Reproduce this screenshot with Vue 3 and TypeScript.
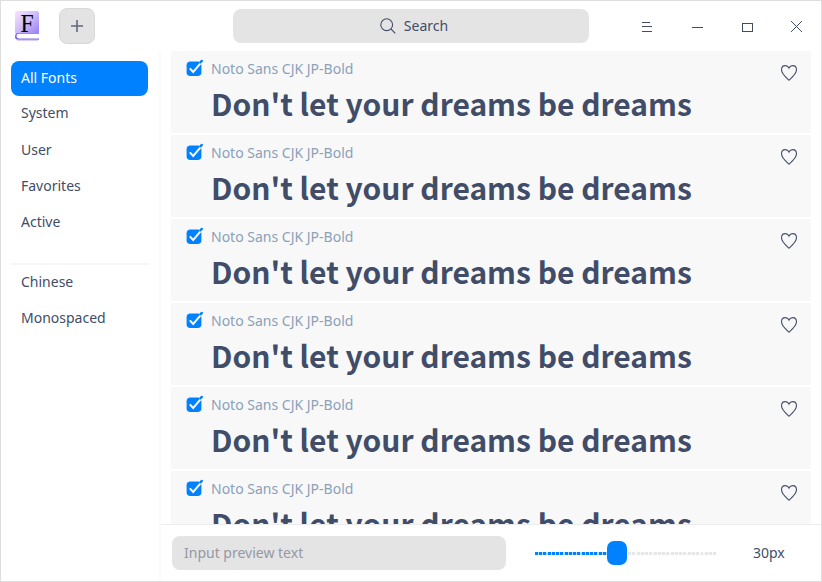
<script setup lang="ts">
import { ref } from 'vue'

interface FontItem {
  id: number
  name: string
  enabled: boolean
}

const groups = ['All Fonts', 'System', 'User', 'Favorites', 'Active']
const categories = ['Chinese', 'Monospaced']
const selected = ref('All Fonts')
const preview = "Don't let your dreams be dreams"
const fonts = ref<FontItem[]>(
  Array.from({ length: 6 }, (_, id) => ({ id, name: 'Noto Sans CJK JP-Bold', enabled: true })),
)
</script>

<template>
  <div class="window">
    <header class="titlebar">
      <svg class="logo" width="26" height="32" viewBox="0 0 26 32">
        <defs>
          <linearGradient id="cover" x1="0" y1="0" x2="1" y2="1">
            <stop offset="0" stop-color="#fbe3fc" />
            <stop offset="0.5" stop-color="#cdbcfb" />
            <stop offset="1" stop-color="#967ff5" />
          </linearGradient>
        </defs>
        <path d="M3 1H23a2 2 0 0 1 2 2V23.5H1V3a2 2 0 0 1 2-2z" fill="url(#cover)" />
        <path d="M4 23H25V29.8H4Q1 29.5 1 26.4Q1.3 23 4 23z" fill="#8065da" />
        <path d="M25 23.8H4.8a2.3 2.3 0 0 0 0 4.6H25z" fill="#fff" />
        <path d="M3 30.3H24" stroke="#cfc5f3" stroke-width="1" />
        <text class="letter" x="6.6" y="22" textLength="13.2" lengthAdjust="spacingAndGlyphs">F</text>
      </svg>
      <button class="add" aria-label="Add font">
        <svg width="12" height="12"><path d="M6 0V12M0 6H12" stroke="#5f697f" stroke-width="1.6" /></svg>
      </button>
      <div class="search">
        <svg width="16" height="16" fill="none" stroke="#414d68" stroke-width="1.1">
          <circle cx="6.7" cy="6.7" r="5.9" /><path d="M11 11L15.3 15.3" />
        </svg>
        <span>Search</span>
      </div>
      <nav class="controls">
        <svg width="50" height="50" class="crisp"><path d="M21 22.5H29M21 26.5H31M21 31.5H31" /></svg>
        <svg width="50" height="50" class="crisp"><path d="M21 27.5H32" /></svg>
        <svg width="50" height="50" class="crisp"><path d="M21.5 23.5H31.5V31.5H21.5z" /></svg>
        <svg width="50" height="50"><path d="M20 21L31 32M31 21L20 32" /></svg>
      </nav>
    </header>
    <div class="body">
      <aside class="sidebar">
        <div
          v-for="group in groups" :key="group" class="entry"
          :class="{ active: selected === group, raised: group === 'System' }" @click="selected = group"
        >{{ group }}</div>
        <div class="divider"></div>
        <div
          v-for="category in categories" :key="category" class="entry"
          :class="{ active: selected === category }" @click="selected = category"
        >{{ category }}</div>
      </aside>
      <main class="content">
        <section class="list">
          <article v-for="font in fonts" :key="font.id" class="row">
            <svg class="check" width="18" height="18" viewBox="0 0 18 18" @click="font.enabled = !font.enabled">
              <rect x="0.6" y="2.4" width="14.8" height="14.6" rx="3.8" fill="#0081ff" />
              <template v-if="font.enabled">
                <path d="M3.8 9.4L7.2 13L15.4 3.4" fill="none" stroke="#f8f8f8" stroke-width="2" />
                <path d="M14.6 3.3L15.8 1.9" stroke="#0081ff" stroke-width="2.4" stroke-linecap="round" />
              </template>
            </svg>
            <div class="info">
              <div class="name">{{ font.name }}</div>
              <div class="sample">{{ preview }}</div>
            </div>
            <svg class="heart" width="18" height="18" viewBox="0 0 18 18">
              <path d="M9 16.2C6.6 13.9 1.5 10 1.5 5.8C1.5 3.2 3.1 1.6 5.2 1.6C7 1.6 8.4 2.6 9 4C9.6 2.6 11 1.6 12.8 1.6C14.9 1.6 16.5 3.2 16.5 5.8C16.5 10 11.4 13.9 9 16.2z" />
            </svg>
          </article>
        </section>
        <footer class="bottom">
          <input class="input" type="text" placeholder="Input preview text">
          <div class="slider">
            <div class="filled"></div>
            <div class="handle"></div>
            <div class="rest"></div>
          </div>
          <span class="size">30px</span>
        </footer>
      </main>
    </div>
  </div>
</template>

<style>
body { background: #fff; }
</style>

<style scoped>
* { box-sizing: border-box; }
.window {
  width: 822px; height: 582px; border: 1px solid #dedede; background: #fff;
  display: flex; flex-direction: column; overflow: hidden;
  font-family: "Noto Sans", sans-serif; font-size: 14px; color: #414d68;
}
.titlebar { height: 50px; flex: none; display: flex; align-items: center; }
.logo { margin-left: 13px; flex: none; }
.letter { font-family: "Liberation Serif", serif; font-size: 25px; fill: #000; }
.add {
  width: 36px; height: 36px; margin-left: 19px; padding: 0; border: 1px solid #d8d8d8; border-radius: 8px;
  background: #e3e3e3; display: flex; align-items: center; justify-content: center;
}
.search {
  width: 356px; height: 34px; margin-left: 138px; border-radius: 8px; background: #e4e4e4;
  display: flex; align-items: center; justify-content: center; gap: 8px; padding-left: 6px;
}
.search span { padding-bottom: 2px; }
.controls { display: flex; margin-left: auto; height: 50px; }
.controls svg { fill: none; stroke: #414d68; stroke-width: 1; margin-top: -1px; }
.crisp { shape-rendering: crispEdges; }
.body { flex: 1; display: flex; min-height: 0; }
.sidebar { width: 160px; flex: none; border-right: 2px solid #fbfbfb; padding: 10px 10px 0 10px; }
.entry { width: 137px; height: 35px; line-height: 34px; margin-bottom: 1px; padding-left: 10px; border-radius: 8px; }
.entry.raised { line-height: 32px; }
.entry.active { background: #0081ff; color: #fff; }
.divider { height: 2px; background: #f7f7f7; margin: 23px 0 0; }
.content { flex: 1; display: flex; flex-direction: column; min-width: 0; }
.list { flex: 1; min-height: 0; overflow: hidden; padding: 0 10px; }
.row { height: 82px; margin-bottom: 2px; background: #f8f8f8; display: flex; align-items: flex-start; }
.check { margin: 8px 0 0 15px; flex: none; }
.info { flex: 1; margin-left: 7px; }
.name { height: 20px; margin-top: 8px; line-height: 20px; color: #8aa1b8; }
.sample {
  margin-top: 4px; height: 40px; line-height: 40px; white-space: nowrap;
  font-family: "Noto Sans CJK JP", sans-serif; font-weight: 700; font-size: 30px;
}
.heart { margin: 13px 13px 0 0; fill: none; stroke: #414d68; stroke-width: 1.1; }
.bottom { height: 57px; flex: none; border-top: 1px solid #ececec; display: flex; align-items: center; padding-left: 11px; }
.input {
  width: 334px; height: 34px; border: 0; border-radius: 8px; background: #e4e4e4; padding: 0 12px 2px;
  font: inherit; color: #414d68; outline: none;
}
.input::placeholder { color: #9599a6; opacity: 1; }
.slider { width: 182px; margin-left: 29px; display: flex; align-items: center; }
.filled { width: 72px; height: 3px; background: repeating-linear-gradient(90deg, #0081ff 0 3px, #b5dbff 3px 4.25px); }
.handle { width: 20px; height: 24px; border-radius: 7px; background: #0081ff; }
.rest { flex: 1; height: 3px; background: repeating-linear-gradient(90deg, #fafafa 0 1.25px, #e7e7e7 1.25px 4.25px); }
.size { margin-left: 36px; padding-bottom: 1px; }
</style>
